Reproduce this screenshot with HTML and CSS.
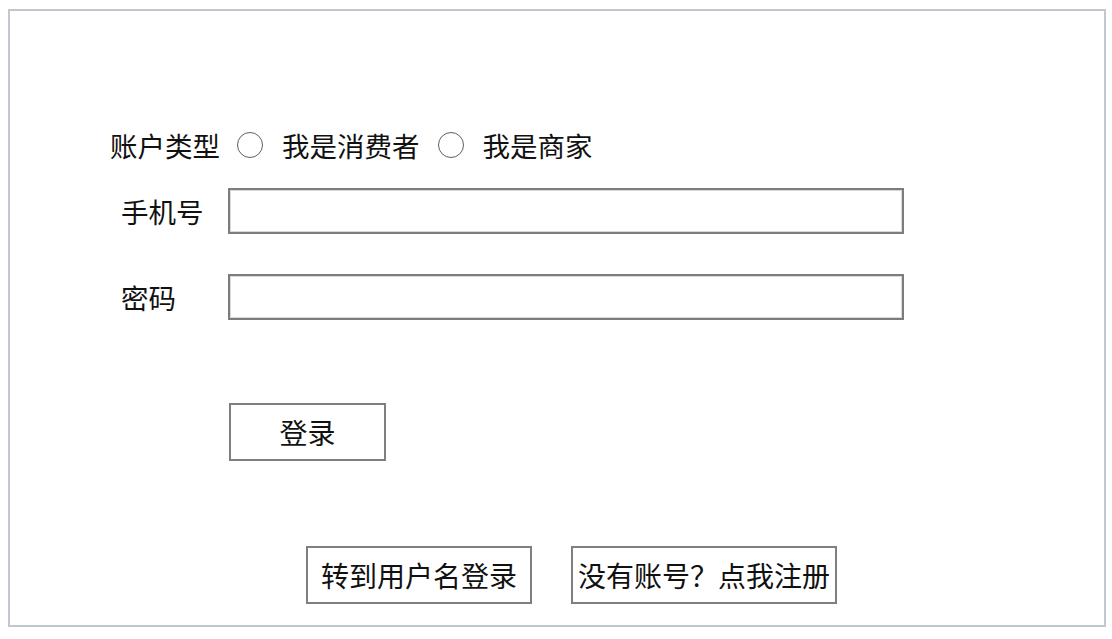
FILE: index.html
```html
<!DOCTYPE html>
<html lang="zh-CN">
<head>
<meta charset="utf-8">
<title>登录</title>
<link rel="stylesheet" href="styles.css">
</head>
<body>
<div class="frame">
  <form class="login-form">
    <div class="type-row">
      <span class="type-label">账户类型</span>
      <label class="radio-option"><input type="radio" name="type" class="radio"><span>我是消费者</span></label>
      <label class="radio-option"><input type="radio" name="type" class="radio"><span>我是商家</span></label>
    </div>
    <div class="field-row field-phone">
      <span class="field-label">手机号</span>
      <input type="text" class="text-input">
    </div>
    <div class="field-row field-pwd">
      <span class="field-label">密码</span>
      <input type="password" class="text-input">
    </div>
    <div class="submit-row">
      <button type="button" class="btn btn-login">登录</button>
    </div>
    <div class="link-row">
      <button type="button" class="btn btn-link btn-switch">转到用户名登录</button>
      <button type="button" class="btn btn-link btn-register">没有账号？点我注册</button>
    </div>
  </form>
</div>
</body>
</html>
```

FILE: styles.css
```css
html, body {
  margin: 0;
  padding: 0;
  background: #ffffff;
}

body {
  font-family: "Noto Sans CJK SC", "Noto Sans", sans-serif;
  color: #111111;
}

.frame {
  box-sizing: border-box;
  width: 1098px;
  height: 618px;
  margin: 9px 0 0 8px;
  border: 2px solid #c2c6cf;
  background: #ffffff;
}

.login-form {
  display: flex;
  flex-direction: column;
  padding-top: 119px;
}

.type-row {
  display: flex;
  align-items: center;
  height: 30px;
  padding-left: 100px;
  font-size: 27.5px;
  line-height: 30px;
}

.type-label {
  margin-right: 17px;
}

.radio-option {
  display: flex;
  align-items: center;
  margin-right: 18px;
}

.radio {
  appearance: none;
  -webkit-appearance: none;
  box-sizing: border-box;
  width: 26px;
  height: 26px;
  margin: 0 19px 0 0;
  border: 1.6px solid #606060;
  border-radius: 50%;
  background: #ffffff;
}

.field-row {
  display: flex;
  align-items: center;
  height: 46px;
  padding-left: 111px;
}

.field-phone {
  margin-top: 28px;
}

.field-pwd {
  margin-top: 40px;
}

.field-label {
  width: 107px;
  font-size: 27.5px;
  line-height: 30px;
}

.text-input {
  box-sizing: border-box;
  width: 676px;
  height: 46px;
  margin: 0;
  border: 2px solid #7d7d7d;
  box-shadow: inset 0 0 0 1px #d8d8d8;
  background: #ffffff;
  outline: none;
}

.submit-row {
  display: flex;
  margin-top: 83px;
  padding-left: 219px;
}

.btn {
  box-sizing: border-box;
  margin: 0;
  padding: 0;
  border: 2px solid #7f7f7f;
  background: #ffffff;
  color: #111111;
  font-family: "Noto Sans CJK SC", "Noto Sans", sans-serif;
  cursor: pointer;
}

.btn-login {
  width: 157px;
  height: 58px;
  font-size: 28px;
}

.link-row {
  display: flex;
  gap: 39px;
  margin-top: 85px;
  padding-left: 296px;
}

.btn-link {
  height: 58px;
  font-size: 28px;
  white-space: nowrap;
}

.btn-switch {
  width: 226px;
}

.btn-register {
  width: 266px;
}
```
